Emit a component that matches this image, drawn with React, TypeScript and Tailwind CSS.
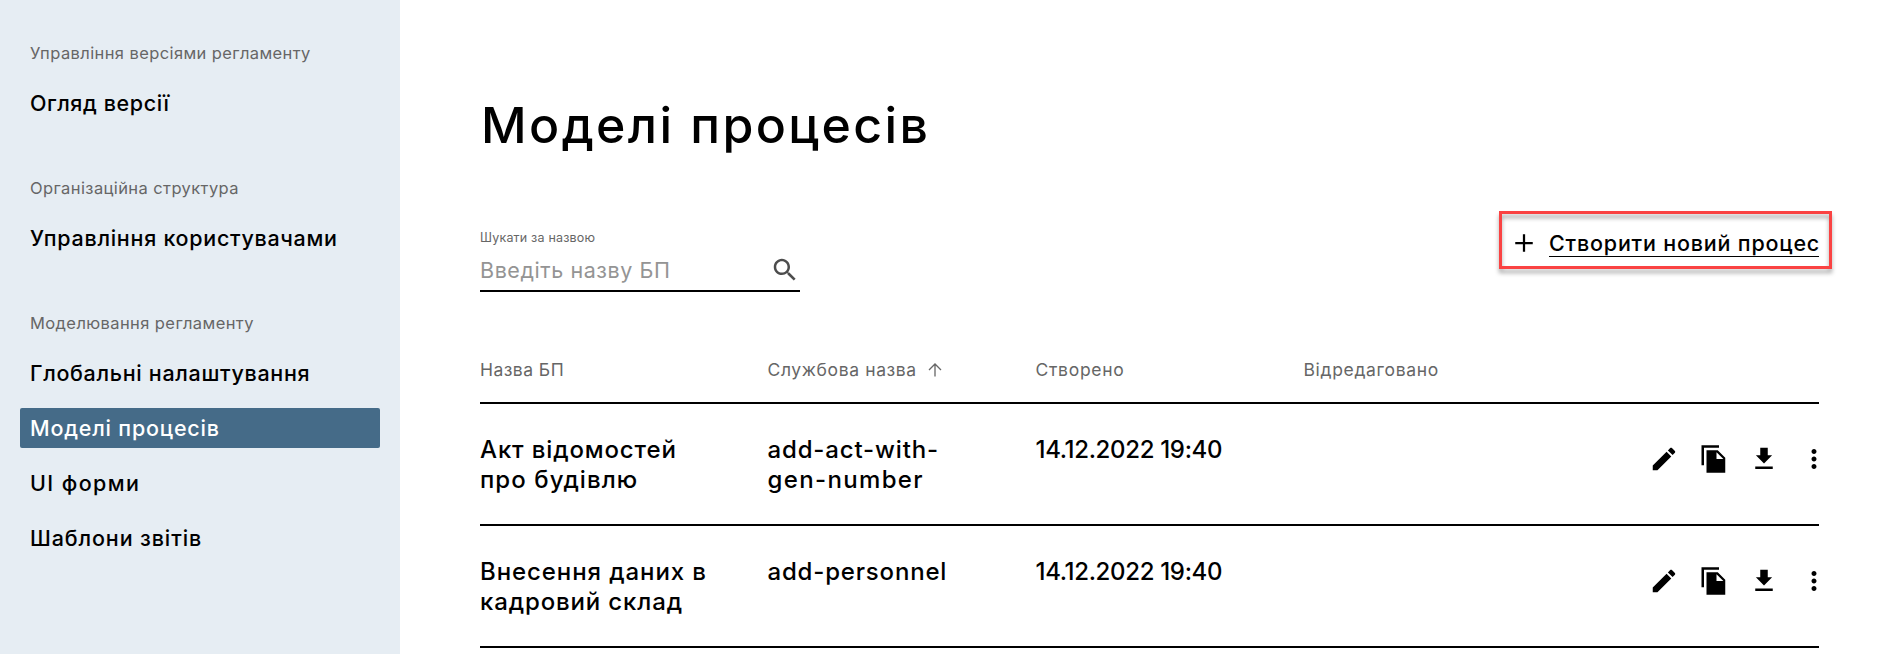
type NavItem = { label: string; tracking: string; active?: boolean };

const sections: { title: string; items: NavItem[] }[] = [
  {
    title: "Управління версіями регламенту",
    items: [{ label: "Огляд версії", tracking: "tracking-[0.6px]" }],
  },
  {
    title: "Організаційна структура",
    items: [{ label: "Управління користувачами", tracking: "tracking-[0.71px]" }],
  },
  {
    title: "Моделювання регламенту",
    items: [
      { label: "Глобальні налаштування", tracking: "tracking-[0.68px]" },
      { label: "Моделі процесів", tracking: "tracking-[0.8px]", active: true },
      { label: "UI форми", tracking: "tracking-[1.4px]" },
      { label: "Шаблони звітів", tracking: "tracking-[0.88px]" },
    ],
  },
];

type Line = { text: string; tracking: string };

const rows: { name: Line[]; code: Line[]; created: string }[] = [
  {
    name: [
      { text: "Акт відомостей", tracking: "tracking-[0.86px]" },
      { text: "про будівлю", tracking: "tracking-[1.05px]" },
    ],
    code: [
      { text: "add-act-with-", tracking: "tracking-[0.85px]" },
      { text: "gen-number", tracking: "tracking-[1.35px]" },
    ],
    created: "14.12.2022 19:40",
  },
  {
    name: [
      { text: "Внесення даних в", tracking: "tracking-[0.91px]" },
      { text: "кадровий склад", tracking: "tracking-[0.86px]" },
    ],
    code: [{ text: "add-personnel", tracking: "tracking-[0.82px]" }],
    created: "14.12.2022 19:40",
  },
];

const icons = {
  edit: "M3 17.25V21h3.75L17.81 9.94l-3.75-3.75L3 17.25zM20.71 7.04c.39-.39.39-1.02 0-1.41l-2.34-2.34c-.39-.39-1.02-.39-1.41 0l-1.83 1.83 3.75 3.75 1.83-1.83z",
  copy: "M16 1H2v16h2V3h12V1zm-1 4 6 6v12H6V5h9zm-1 7h5.5L14 6.5V12z",
  download: "M18.5 9h-3.5V3H9v6H5.5l6.5 6.5L18.5 9zM5 18v2h14v-2H5z",
  more: "M12 8c1.1 0 2-.9 2-2s-.9-2-2-2-2 .9-2 2 .9 2 2 2zm0 2c-1.1 0-2 .9-2 2s.9 2 2 2 2-.9 2-2-.9-2-2-2zm0 6c-1.1 0-2 .9-2 2s.9 2 2 2 2-.9 2-2-.9-2-2-2z",
  add: "M19 12.9h-6.1V19h-1.8v-6.1H5v-1.8h6.1V5h1.8v6.1H19v1.8z",
  search:
    "M15.5 14h-.79l-.28-.27C15.41 12.59 16 11.11 16 9.5 16 5.91 13.09 3 9.5 3S3 5.91 3 9.5 5.91 16 9.5 16c1.61 0 3.09-.59 4.23-1.57l.27.28v.79l5 4.99L20.49 19l-4.99-5zm-6 0C7.01 14 5 11.99 5 9.5S7.01 5 9.5 5 14 7.01 14 9.5 11.99 14 9.5 14z",
};

function Icon({ path, className = "" }: { path: string; className?: string }) {
  return (
    <svg viewBox="0 0 24 24" fill="currentColor" className={`size-[30px] shrink-0 ${className}`}>
      <path d={path} />
    </svg>
  );
}

function Lines({ lines }: { lines: Line[] }) {
  return (
    <div>
      {lines.map((l) => (
        <div key={l.text} className={`whitespace-nowrap ${l.tracking}`}>
          {l.text}
        </div>
      ))}
    </div>
  );
}

function Sidebar() {
  return (
    <aside className="flex w-[400px] shrink-0 flex-col gap-[55px] bg-[#e6edf3] px-5 pt-[43px]">
      {sections.map((s) => (
        <section key={s.title}>
          <h2 className="px-2.5 text-[16.5px] leading-5 tracking-[0.4px] text-[#666]">{s.title}</h2>
          <nav className="mt-5 flex flex-col gap-[15px]">
            {s.items.map((item) => (
              <a
                key={item.label}
                className={`h-10 rounded-[2px] px-2.5 text-[21.5px] leading-10 font-medium whitespace-nowrap ${item.tracking} ${
                  item.active ? "bg-[#456b88] text-white" : "text-black"
                }`}
              >
                {item.label}
              </a>
            ))}
          </nav>
        </section>
      ))}
    </aside>
  );
}

function Toolbar() {
  return (
    <div className="mt-14 flex items-start justify-between">
      <div className="w-80 pt-[19px]">
        <div className="text-[12.5px] leading-4 tracking-[0.19px] text-[#666]">Шукати за назвою</div>
        <div className="flex h-[46px] justify-between border-b-2 border-black pt-[9px]">
          <span className="text-[21.5px] leading-[30px] tracking-[0.57px] text-[#949494]">Введіть назву БП</span>
          <Icon path={icons.search} className="text-[#4d4d4d]" />
        </div>
      </div>
      <div className="relative -mr-[13px] flex h-[58px] w-[333px] items-start pl-2.5">
        <Icon path={icons.add} className="mt-[17px]" />
        <span className="mt-5 ml-2.5 h-[26px] w-[270px] border-b border-black text-[21.5px] leading-[25px] font-medium tracking-[0.8px] whitespace-nowrap">
          Створити новий процес
        </span>
        <div className="absolute inset-0 border-3 border-[#fa4343] drop-shadow-[0_4px_2px_rgba(0,0,0,0.35)]" />
      </div>
    </div>
  );
}

function ProcessTable() {
  return (
    <div className="mt-[66px]">
      <div className="grid h-[46px] grid-cols-[287.5px_268px_268px_1fr] border-b-2 border-black text-[17.5px] leading-6 text-[#666]">
        <span className="tracking-[0.46px]">Назва БП</span>
        <span className="flex tracking-[0.62px]">
          Службова назва
          <svg viewBox="0 0 14 14" fill="none" stroke="currentColor" strokeWidth="1.3" className="mt-[5px] ml-[11px] size-3.5">
            <path d="M7 13.5V1M1 7l6-6 6 6" />
          </svg>
        </span>
        <span className="tracking-[0.7px]">Створено</span>
        <span className="tracking-[0.66px]">Відредаговано</span>
      </div>
      {rows.map((row) => (
        <div
          key={row.name[0].text}
          className="grid h-[122px] grid-cols-[287.5px_268px_268px_1fr] border-b-2 border-black pt-[31px] text-2xl leading-[30px] font-medium"
        >
          <Lines lines={row.name} />
          <Lines lines={row.code} />
          <div className="tracking-[-0.33px]">{row.created}</div>
          <div className="-mr-2.5 flex justify-end gap-5 pt-[9px]">
            <Icon path={icons.edit} />
            <Icon path={icons.copy} />
            <Icon path={icons.download} />
            <Icon path={icons.more} />
          </div>
        </div>
      ))}
    </div>
  );
}

export default function App() {
  return (
    <div className="flex h-[654px] overflow-hidden bg-white font-[Inter,sans-serif] text-black">
      <Sidebar />
      <main className="min-w-0 flex-1 pt-[95px] pr-[77px] pl-20">
        <h1 className="pl-px text-[50px] leading-[60px] font-medium tracking-[2.4px]">Моделі процесів</h1>
        <Toolbar />
        <ProcessTable />
      </main>
    </div>
  );
}
